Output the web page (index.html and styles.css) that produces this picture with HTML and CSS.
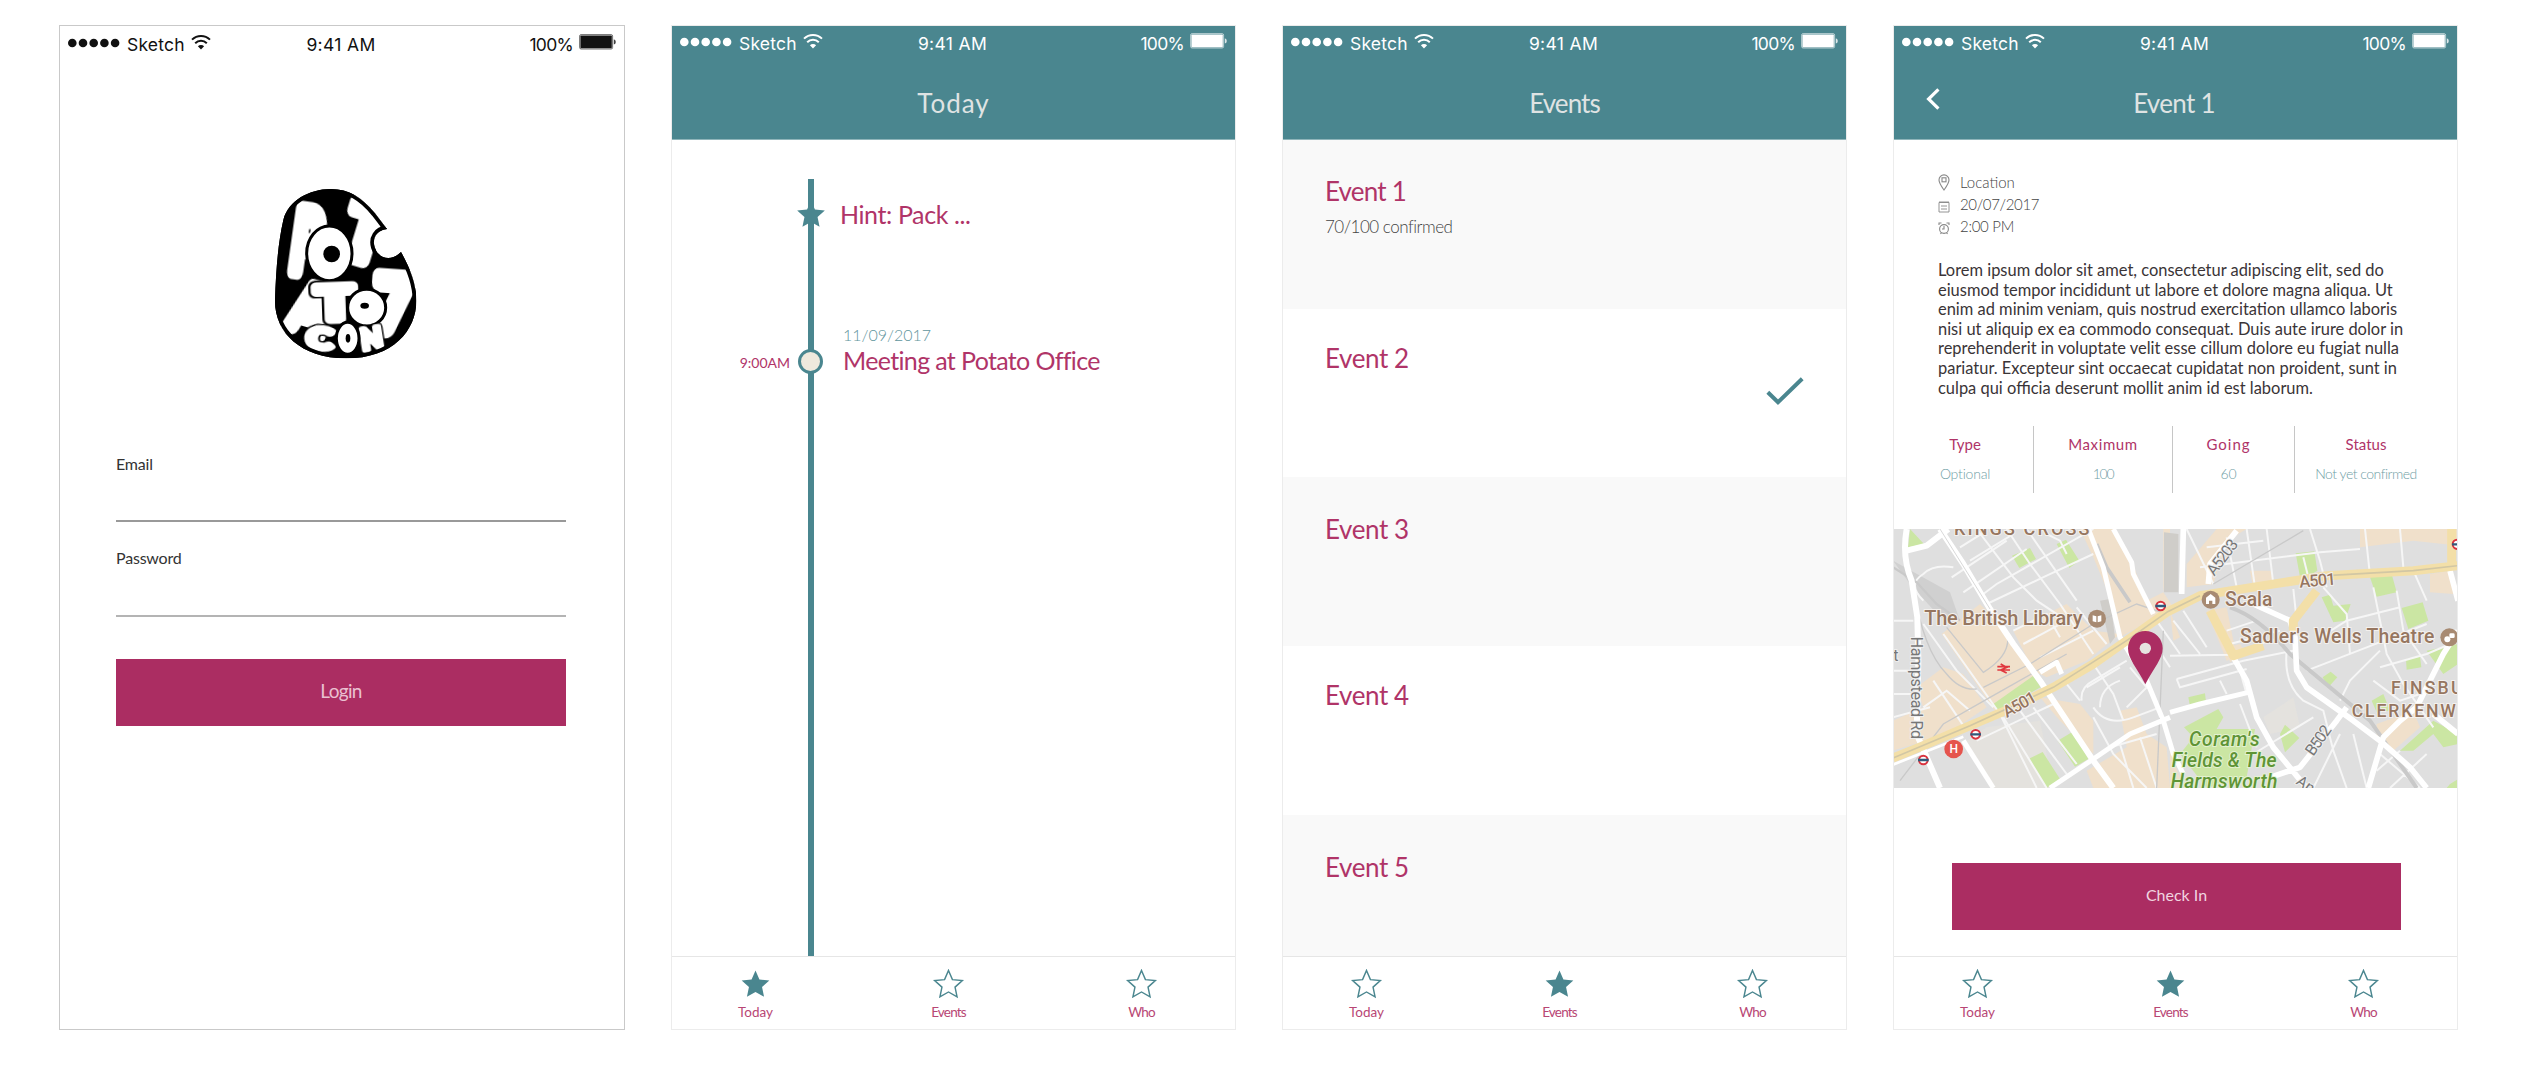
FILE: index.html
```html
<!DOCTYPE html>
<html lang="en">
<head>
<meta charset="utf-8">
<title>Potato Con</title>
<link rel="stylesheet" href="styles.css">
</head>
<body>
<svg class="defs" aria-hidden="true">
  <symbol id="star" viewBox="-1.1 -1.1 2.2 2.2"><path d="M0-1 .27-.37 .951-.309 .45 .146 .588 .809 0 .48-.588 .809-.45 .146-.951-.309-.27-.37Z"/></symbol>
  <symbol id="dots" viewBox="0 0 52 10"><circle cx="4.3" cy="5" r="4.3"/><circle cx="15" cy="5" r="4.3"/><circle cx="25.7" cy="5" r="4.3"/><circle cx="36.4" cy="5" r="4.3"/><circle cx="47.1" cy="5" r="4.3"/></symbol>
  <symbol id="wifi" viewBox="0 0 20 16"><path d="M10 15.4 6.9 12.2a4.4 4.4 0 0 1 6.2 0Z"/><path d="M4.2 9.2a8.3 8.3 0 0 1 11.6 0M1 5.6a13 13 0 0 1 18 0" fill="none" stroke="currentColor" stroke-width="2"/></symbol>
  <symbol id="battery" viewBox="0 0 37 16"><rect x=".6" y=".6" width="33" height="14.4" rx="1.5" fill="none" stroke="currentColor" stroke-width="1" opacity=".6"/><rect x="1.4" y="1.6" width="31.4" height="12.6" rx=".6"/><path d="M34.8 5.2q2 .7 2 2.7t-2 2.7Z" opacity=".8"/></symbol>
</svg>
<main class="board">

  <section class="phone phone-login">
    <div class="status">
      <div class="carrier"><svg class="dots"><use href="#dots"/></svg><span class="net">Sketch</span><svg class="wifi"><use href="#wifi"/></svg></div>
      <span class="clock">9:41 AM</span>
      <div class="power"><span class="pct">100%</span><svg class="battery"><use href="#battery"/></svg></div>
    </div>
    <svg class="logo" viewBox="72 54 432 513">
      <clipPath id="potato"><path d="M240 57C295 56 336 82 375 130L411 177C380 181 366 204 374 232C384 266 424 276 453 246C478 290 499 340 499 392C499 480 430 565 288 565C150 565 73 484 75 390C78 300 84 220 100 150C115 90 180 58 240 57Z"/></clipPath>
      <g clip-path="url(#potato)">
        <rect x="72" y="54" width="432" height="513"/>
        <g class="logo-letters">
          <text transform="translate(158 306) rotate(8) scale(2.1 3.9)">P</text>
          <text transform="translate(326 268) rotate(17) scale(3 3.5)">T</text>
          <ellipse cx="238" cy="250" rx="68" ry="82"/>
          <text transform="translate(160 484) rotate(16) scale(2.3 2.9)">A</text>
          <text transform="translate(256 448) rotate(-2) scale(2.8 2.1)">T</text>
          <text transform="translate(422 484) rotate(4) scale(2.9 3.5)">7</text>
          <ellipse cx="350" cy="413" rx="57" ry="55"/>
          <text transform="translate(206 536) rotate(6) scale(1.8 1.3)">C</text>
          <text transform="translate(370 536) rotate(-9) scale(1.25 1.25)">N</text>
          <ellipse cx="293" cy="505" rx="34" ry="48"/>
        </g>
        <circle cx="245" cy="252" r="25"/>
        <ellipse cx="344" cy="407" rx="13" ry="9"/>
        <ellipse cx="294" cy="505" rx="7" ry="13"/>
        <path d="M240 57C295 56 336 82 375 130L411 177C380 181 366 204 374 232C384 266 424 276 453 246C478 290 499 340 499 392C499 480 430 565 288 565C150 565 73 484 75 390C78 300 84 220 100 150C115 90 180 58 240 57Z" fill="none" stroke="#000" stroke-width="22"/>
      </g>
    </svg>
    <form class="login">
      <label class="field field-email"><span>Email</span></label>
      <label class="field field-password"><span>Password</span></label>
      <button type="button" class="btn btn-login">Login</button>
    </form>
  </section>

  <section class="phone">
    <header class="bar">
      <div class="status">
        <div class="carrier"><svg class="dots"><use href="#dots"/></svg><span class="net">Sketch</span><svg class="wifi"><use href="#wifi"/></svg></div>
        <span class="clock">9:41 AM</span>
        <div class="power"><span class="pct">100%</span><svg class="battery"><use href="#battery"/></svg></div>
      </div>
      <div class="title-row"><h1 class="title-today">Today</h1></div>
    </header>
    <div class="timeline">
      <div class="entry entry-hint">
        <span></span>
        <svg class="hint-star"><use href="#star"/></svg>
        <h2>Hint: Pack ...</h2>
      </div>
      <div class="entry entry-meeting">
        <time class="hour">9:00AM</time>
        <i class="node"></i>
        <div><time class="date">11/09/2017</time><h2>Meeting at Potato Office</h2></div>
      </div>
    </div>
    <nav class="tabs">
      <a class="tab active"><svg><use href="#star"/></svg><span class="l-today">Today</span></a>
      <a class="tab"><svg><use href="#star"/></svg><span>Events</span></a>
      <a class="tab"><svg><use href="#star"/></svg><span>Who</span></a>
    </nav>
  </section>

  <section class="phone">
    <header class="bar">
      <div class="status">
        <div class="carrier"><svg class="dots"><use href="#dots"/></svg><span class="net">Sketch</span><svg class="wifi"><use href="#wifi"/></svg></div>
        <span class="clock">9:41 AM</span>
        <div class="power"><span class="pct">100%</span><svg class="battery"><use href="#battery"/></svg></div>
      </div>
      <div class="title-row"><h1>Events</h1></div>
    </header>
    <div class="events">
      <article class="event"><div><h2 class="one">Event 1</h2><p>70/100 confirmed</p></div></article>
      <article class="event"><h2>Event 2</h2><svg class="check" viewBox="0 0 38 28"><path d="M1.8 15.2 12 25.2 36.2 1.8" fill="none" stroke="currentColor" stroke-width="4"/></svg></article>
      <article class="event"><h2>Event 3</h2></article>
      <article class="event"><h2>Event 4</h2></article>
      <article class="event"><h2>Event 5</h2></article>
    </div>
    <nav class="tabs">
      <a class="tab"><svg><use href="#star"/></svg><span class="l-today">Today</span></a>
      <a class="tab active"><svg><use href="#star"/></svg><span>Events</span></a>
      <a class="tab"><svg><use href="#star"/></svg><span>Who</span></a>
    </nav>
  </section>

  <section class="phone">
    <header class="bar">
      <div class="status">
        <div class="carrier"><svg class="dots"><use href="#dots"/></svg><span class="net">Sketch</span><svg class="wifi"><use href="#wifi"/></svg></div>
        <span class="clock">9:41 AM</span>
        <div class="power"><span class="pct">100%</span><svg class="battery"><use href="#battery"/></svg></div>
      </div>
      <div class="title-row">
        <svg class="back" viewBox="0 0 14 22"><path d="M12.4 1.4 2.6 11 12.4 20.6" fill="none" stroke="#fff" stroke-width="3.2"/></svg>
        <h1 class="title-event">Event 1</h1>
      </div>
    </header>
    <ul class="meta">
      <li><svg viewBox="0 0 12 17"><path d="M6 16C3 11.6 1 8.8 1 5.9a5 5 0 0 1 10 0C11 8.8 9 11.6 6 16Z"/><rect x="4" y="3.8" width="4" height="4"/></svg><span>Location</span></li>
      <li><svg class="low" viewBox="0 0 12 17"><path d="M1 4.5H11V14H1ZM1 4H11M3 8H9M3 11H9" stroke-width=".9"/></svg><span class="day">20/07/2017</span></li>
      <li><svg class="low" viewBox="0 0 12 17"><circle cx="6" cy="9" r="4.4"/><path d="M1 5V3H3.5M11 5V3H8.5M6 6V9H4M2.5 14 3.5 12.6M9.5 14 8.5 12.6"/></svg><span class="hm">2:00 PM</span></li>
    </ul>
    <p class="lorem">Lorem ipsum dolor sit amet, consectetur adipiscing elit, sed do<br>eiusmod tempor incididunt ut labore et dolore magna aliqua. Ut<br>enim ad minim veniam, quis nostrud exercitation ullamco laboris<br>nisi ut aliquip ex ea commodo consequat. Duis aute irure dolor in<br>reprehenderit in voluptate velit esse cillum dolore eu fugiat nulla<br>pariatur. Excepteur sint occaecat cupidatat non proident, sunt in<br>culpa qui officia deserunt mollit anim id est laborum.</p>
    <dl class="stats">
      <div><dt>Type</dt><dd class="opt">Optional</dd></div>
      <div><dt class="max">Maximum</dt><dd class="num">100</dd></div>
      <div class="going"><dt>Going</dt><dd>60</dd></div>
      <div><dt>Status</dt><dd class="state">Not yet confirmed</dd></div>
    </dl>
    <svg class="map" viewBox="39 25 1695 777">
      <rect x="39" y="25" width="1695" height="777" fill="#dfdfdf"/>
      <!-- built-up areas -->
      <g fill="#f0e0cb">
        <path d="M600 25H870V60L850 215 880 260 720 350 690 230 640 110ZM700 25 755 120 800 240 850 215 850 25Z"/>
        <path d="M185 340 300 250 380 330 470 470 345 570Z"/>
        <path d="M400 330 560 250 640 330 720 340 620 420 500 470 460 450Z"/>
        <path d="M39 600 130 560 110 500 190 440 250 460 320 560 200 640 39 690Z"/>
        <path d="M480 530 600 550 640 600 640 700 540 600ZM720 570 770 560 800 640 860 680 870 802H640L620 750 740 680Z"/>
        <path d="M870 270 900 350 880 360ZM920 130 1010 25H1100L1040 60 1000 190 920 200ZM1110 150 1175 150 1180 200 1120 205Z"/>
        <path d="M1440 25H1734V75L1600 60 1440 80ZM1650 160 1710 150 1720 220 1650 215Z"/>
        <path d="M1490 610 1600 570 1620 620 1540 690 1490 660ZM870 690 910 802H870ZM1040 380 1080 370 1100 400 1050 425Z"/>
        <path d="M980 270 1040 260 1070 410 1040 420Z"/>
      </g>
      <path d="M715 25 770 135 830 25Z" fill="#dfdfdf"/>
      <path d="M39 120 210 215 240 300 180 290 90 190Z" fill="#d0d0d0"/>
      <path d="M660 240 690 235 705 350 690 370ZM852 35 895 40V215H852Z" fill="#cfcdc9"/>
      <path d="M320 620 480 600 520 802H340L260 660ZM1150 590 1240 530 1260 620 1170 640Z" fill="#e4e2de"/>
      <!-- parks -->
      <g fill="#cbe6a3">
        <path d="M90 25 132 70 84 80ZM396 105 450 82 468 115 418 142ZM530 70 558 57 598 120 568 142ZM340 550 460 465 482 500 350 572ZM533 660 578 633 625 715 585 738ZM445 715 488 694 540 775 500 802Z"/>
        <path d="M1247 98 1303 92 1312 150 1262 180ZM1470 170 1535 160 1550 215 1490 228ZM1325 230 1350 222 1360 255 1412 250 1395 300 1360 305ZM1565 262 1628 245 1645 300 1585 325ZM1328 470 1352 453 1372 470 1345 500ZM1578 415 1620 408 1624 440 1580 447ZM1640 390 1734 370V430L1690 460Z"/>
        <path d="M925 530 975 518 978 545 930 557ZM912 620 1015 565 1030 590 1010 625 1125 625 1100 770 980 802 900 700 940 650ZM1200 640 1215 612 1258 652 1215 695ZM1475 540 1510 520 1530 570 1490 575ZM1560 690 1660 600 1734 640V670L1690 680 1660 640 1600 690ZM1710 790 1734 775V802H1700Z"/>
      </g>
      <!-- minor streets -->
      <g fill="none" stroke="#f6f6f6" stroke-width="6">
        <path d="M215 170 380 60M250 215 440 85M310 220 350 190 640 25M320 250 500 165 640 100M240 80 320 30M270 120 400 40M290 25 400 170 470 240 560 300M380 25 450 130 540 250M440 25 520 140 590 240M500 40 540 60 560 100"/>
        <path d="M130 240Q80 190 130 160Q160 130 220 140M39 300H100M39 450H110M39 520H100M130 310 230 450 340 560M190 340 360 580 470 802M130 560 200 510 270 570M160 480 260 630M39 590 150 560M290 660 520 550M370 590 500 802M420 570 560 760M460 560 590 730"/>
        <path d="M430 370 560 300M400 330 500 280 540 350M540 250 640 400M590 260 680 370M480 410 640 330M560 490 600 540M640 430 700 520 730 600M620 500 720 440M605 540Q600 500 640 480L740 420M640 560Q680 620 760 590L840 560M660 560Q660 500 720 480M750 440 800 500 740 560M640 590 700 700 800 802M690 680 830 640M720 670 760 802M780 650 830 802M800 330 870 440M830 300 900 400"/>
        <path d="M870 405 1050 402 1170 360M880 300 960 400M910 270 980 380M920 25 1000 190M980 80 1150 60M960 140 1320 95 1440 85M1100 25 1125 200M1040 50 1070 200M1160 25 1180 190M1290 25 1320 120 1340 200M1270 110 1290 190M1455 25 1470 165M1560 25 1570 140"/>
        <path d="M890 475 1090 420 1240 390M890 475 900 500 1100 445M1020 480 1040 520M1080 450 1100 520M1040 330 1130 300M1050 370 1200 330M1220 390Q1210 490 1270 540L1330 570 1360 690 1400 802M1280 450 1460 380 1640 310M1240 205 1250 300M1330 200 1400 280 1410 400M1480 200 1520 400 1570 490 1660 620M1550 210 1570 330 1640 430M1600 150 1640 240M1320 350 1400 300 1560 260M1380 540 1410 480 1500 390M1500 440 1640 400 1734 360M1480 480 1560 540 1620 520M1120 700 1300 590M1380 640 1300 802M1420 640 1460 802M1500 700 1620 802M1490 750 1560 690M1530 802 1640 700M1080 550 1130 680"/>
      </g>
      <!-- railways -->
      <g fill="none" stroke="#c9c9c9">
        <path d="M39 140 110 185 170 250 240 300" stroke-width="7"/>
        <path d="M100 200Q130 390 200 460Q240 510 290 505M200 320 310 455Q400 400 380 330M310 500 450 430 640 310 770 250 860 280M60 780 190 610 330 530 560 400M830 802 850 330M1000 190 1270 30" stroke-width="4"/>
        <path d="M1050 260Q1140 290 1230 400L1470 600 1610 802" stroke-width="12"/>
        <path d="M650 70 680 140 750 245" stroke-width="11"/>
      </g>
      <!-- main roads -->
      <g fill="none" stroke="#fff" stroke-linejoin="round">
        <path d="M80 25Q65 110 95 180L112 290 115 420 110 640 180 802M80 90 140 75 205 25M180 25 250 130 330 265 400 370 480 480 520 540 640 720 700 802" stroke-width="18"/>
        <path d="M625 25 670 140 720 350 800 480 850 600 880 700 910 760M700 25 755 125 760 160 820 280M480 455 530 425 545 460M870 575 960 550 1105 515M510 802 640 715 750 640 870 590" stroke-width="15"/>
        <path d="M910 25 905 220M985 190 990 130 1070 30M1120 250 1230 300 1245 350 1250 450 1280 500 1420 600 1500 660 1590 740 1640 802M1060 410 1100 480 1130 590 1180 680 1280 802M1170 770 1260 740 1370 600 1400 560M1465 802 1510 650 1560 600 1610 560 1690 400 1734 330M1710 150 1734 240M1660 580 1734 640" stroke-width="17"/>
        <path d="M250 660 340 802" stroke-width="15"/>
      </g>
      <path d="M180 25 330 265" stroke="#c4c4c4" stroke-width="2"/>
      <!-- A501 -->
      <g fill="none" stroke-linejoin="round">
        <path d="M39 712 130 675 270 615 400 560 520 500 640 430 740 360 860 275 960 225 1150 195 1340 165 1600 150 1734 135M990 270 1060 405 1150 375M1310 210 1240 300 1240 330M1715 25V140" stroke="#f3dfa8" stroke-width="27"/>
        <path d="M39 712 270 615 520 500 740 360 860 275 960 225M1340 165 1600 150 1734 135" stroke="#d2c7a4" stroke-width="5"/>
        <path d="M39 732 250 648" stroke="#fff" stroke-width="8"/>
      </g>
      <!-- labels -->
      <g class="map-label">
        <text x="222" y="42" font-size="54" textLength="406">KINGS CROSS</text>
        <text x="133" y="313" font-size="60" textLength="475">The British Library</text>
        <text x="1035" y="255" font-size="58" textLength="142">Scala</text>
        <text x="1080" y="368" font-size="58" textLength="583">Sadler's Wells Theatre</text>
        <text x="1533" y="519" font-size="53" letter-spacing="6.5">FINSBU</text>
        <text x="1415" y="590" font-size="53" letter-spacing="5.5">CLERKENW</text>
        <text transform="translate(380 592) rotate(-29)" font-size="50" textLength="107">A501</text>
        <text transform="translate(1259 201) rotate(-5)" font-size="50" textLength="110">A501</text>
      </g>
      <g class="map-road">
        <text transform="translate(1003 168) rotate(-53)" font-size="48" textLength="122">A5203</text>
        <text transform="translate(1300 708) rotate(-55)" font-size="48" textLength="98">B502</text>
        <text transform="translate(92 348) rotate(90)" font-size="48" textLength="307">Hampstead Rd</text>
        <text transform="translate(1246 788) rotate(35)" font-size="46">An</text>
        <text x="40" y="422" font-size="48">t</text>
      </g>
      <g class="map-park">
        <text x="927" y="675" font-size="58" textLength="212">Coram's</text>
        <text x="875" y="740" font-size="58" textLength="315">Fields &amp; The</text>
        <text x="872" y="803" font-size="58" textLength="320">Harmsworth</text>
      </g>
      <!-- places -->
      <g fill="#a78a72"><circle cx="651" cy="294" r="27"/><circle cx="992" cy="237" r="27"/><circle cx="1708" cy="350" r="27"/></g>
      <g fill="#fff"><path d="M638 284 649 287V305L638 302ZM664 284 653 287V305L664 302Z"/><path d="M978 250V231L992 220 1006 231V250H997V240H987V250Z"/><circle cx="1702" cy="356" r="9"/><rect x="1708" y="338" width="16" height="14" rx="4"/></g>
      <g fill="#fff" stroke="#d9333f" stroke-width="6"><circle cx="842" cy="256" r="13"/><circle cx="287" cy="641" r="13"/><circle cx="130" cy="718" r="13"/><circle cx="1732" cy="71" r="14"/></g>
      <path d="M826 256H858M271 641H303M114 718H146M1716 71H1734" stroke="#31597a" stroke-width="7"/>
      <circle cx="221" cy="685" r="28" fill="#e5544d"/>
      <text x="221" y="698" font-size="36" text-anchor="middle" class="hospital">H</text>
      <path d="M352 438H390M352 448H390M362 430 380 440 362 448 380 457" fill="none" stroke="#e0383f" stroke-width="5"/>
      <path d="M796 491C770 440 744 415 744 383a52 52 0 0 1 104 0C848 415 822 440 796 491Z" fill="#ab2d62"/>
      <circle cx="796" cy="383" r="17" fill="#e6e3e0"/>
    </svg>
    <button type="button" class="btn btn-checkin">Check In</button>
    <nav class="tabs">
      <a class="tab"><svg><use href="#star"/></svg><span class="l-today">Today</span></a>
      <a class="tab active"><svg><use href="#star"/></svg><span>Events</span></a>
      <a class="tab"><svg><use href="#star"/></svg><span>Who</span></a>
    </nav>
  </section>

</main>
</body>
</html>
```
FILE: styles.css
```css
* { box-sizing: border-box; margin: 0; padding: 0; }
body { background: #fff; font-family: Lato, sans-serif; }
.defs { display: none; }
svg { display: block; flex: none; }

.board { display: flex; gap: 46px; padding: 25px 0 0 59px; }
.phone { display: flex; flex-direction: column; width: 565px; height: 1005px; border: 1px solid #ececec; background: #fff; overflow: hidden; flex: none; }
.phone-login { width: 566px; border-color: #c9c9c9; }

/* status bar */
.status { display: grid; grid-template-columns: 1fr auto 1fr; height: 24px; padding: 0 8px; font: 400 17.5px/24px Inter, sans-serif; color: #fff; fill: currentColor; }
.phone-login .status { margin-top: 7px; color: #111; }
.carrier, .power { display: flex; }
.power { justify-content: flex-end; }
.dots { width: 52px; height: 10px; margin: 5px 7px 0 0; }
.net { letter-spacing: .2px; }
.wifi { width: 20px; height: 16px; margin: 1px 0 0 6px; }
.clock { letter-spacing: .35px; margin-right: 2px; }
.pct { letter-spacing: -.7px; }
.battery { width: 37px; height: 16px; margin: 1px 0 0 6px; }

/* header */
.bar { height: 114px; background: #4a868f; border-bottom: 1px solid #8fb5ba; padding-top: 6px; margin: 0 -1px; flex: none; box-shadow: 0 -1px 0 #4a868f; }
.bar .status { padding: 0 9px; }
.title-row { display: grid; grid-template-columns: 1fr auto 1fr; margin-top: 27px; }
h1 { grid-column: 2; font-weight: 400; font-size: 26px; line-height: 40px; letter-spacing: -.9px; color: #dfe3e3; }
.title-today { letter-spacing: 1px; }
.title-event { letter-spacing: -.7px; margin-right: 3px; }
.back { grid-column: 1; width: 14px; height: 22px; margin: 5px 0 0 33px; }
h2 { font-weight: 400; color: #b03468; }

/* login */
.logo { width: 144px; height: 171px; margin: 131px 0 0 214px; }
.logo-letters { fill: #fff; }
.logo-letters text { stroke: #fff; stroke-width: 13; stroke-linejoin: round; font: 900 66px Lato, sans-serif; text-anchor: middle; filter: drop-shadow(2px 0 0 #000) drop-shadow(-2px 0 0 #000) drop-shadow(0 2px 0 #000) drop-shadow(0 -2px 0 #000); }
.logo-letters ellipse { stroke: #000; stroke-width: 9; }
.login { margin: 95px 56px 0 56px; width: 450px; }
.field { display: block; border-bottom: 2px solid #999; color: #333; font-size: 16px; line-height: 20px; letter-spacing: -.2px; }
.field-email { height: 68px; }
.field-password { height: 69px; margin-top: 26px; border-color: #b4b4b4; }
.btn { display: block; width: 450px; height: 67px; border: 0; background: #ab2d62; color: #f1d5e0; font-family: Lato, sans-serif; flex: none; }
.btn-login { margin-top: 42px; font-size: 19px; letter-spacing: -.7px; padding-bottom: 5px; color: #eac0d1; }

/* timeline */
.timeline { flex: 1; margin-top: 39px; background: linear-gradient(#4a868f, #4a868f) 136px 0 / 6px 100% no-repeat; }
.entry { display: grid; grid-template-columns: 118px 26px 1fr; column-gap: 8px; }
.entry-hint { padding-top: 20px; }
.entry-hint h2 { margin-left: 8px; letter-spacing: -.5px; }
.entry h2 { font-size: 25px; line-height: 30px; letter-spacing: -.65px; }
.entry.entry-hint h2 { letter-spacing: -.4px; }
.hint-star { width: 32px; height: 32px; fill: #4a868f; margin: 0 0 0 -3px; }
.entry-meeting { margin-top: 94px; }
.entry-meeting > div { margin-left: 11px; }
.hour { justify-self: end; font-size: 14px; line-height: 20px; margin-top: 28px; color: #b03468; }
.node { width: 25px; height: 25px; border: 3px solid #4a868f; border-radius: 50%; background: #efe9dd; margin-top: 24px; }
.date { display: block; font-weight: 300; font-size: 16px; line-height: 20px; color: #5f959d; }

/* tab bar */
.tabs { display: grid; grid-template-columns: 167px 219px 167px; height: 73px; margin-top: auto; padding-top: 12px; border-top: 1px solid #e6e6e6; background: #fff; flex: none; }
.tab { display: flex; flex-direction: column; align-items: center; gap: 2px; }
.tab svg { width: 33px; height: 32px; fill: none; stroke: #4a868f; stroke-width: .1; }
.tab.active svg { fill: #4a868f; stroke: none; }
.tab span { font-size: 13.5px; line-height: 18px; letter-spacing: -.8px; color: #b84674; }
.tab .l-today { letter-spacing: 0; }

/* events */
.events { flex: 1; margin: 0 -1px; overflow: hidden; }
.event { display: flex; height: 168.7px; padding: 36px 43px 0; }
.event:nth-child(odd) { background: #f9f9f9; }
.event:nth-child(even) { padding-top: 34px; }
.event:nth-child(n+3):nth-child(odd) { padding-top: 37px; }
.event h2 { font-size: 26px; line-height: 30px; letter-spacing: -.4px; }
.event .one { letter-spacing: -.8px; }
.event p { margin-top: 11px; font-weight: 300; font-size: 17px; line-height: 20px; letter-spacing: -.5px; color: #444; }
.check { width: 38px; height: 28px; margin: 34px 0 0 auto; color: #4a868f; }

/* event detail */
.meta { list-style: none; padding: 31px 0 0 44px; font-weight: 300; font-size: 15px; line-height: 22px; color: #444; }
.meta li { display: flex; height: 22px; }
.meta svg { width: 12px; height: 17px; margin: 3px 10px 0 0; fill: none; stroke: #888; stroke-width: 1.1; }
.meta svg.low { margin-top: 5px; }
.day { letter-spacing: -.35px; }
.hm { letter-spacing: -.3px; }
.lorem { margin: 24px 0 0 44px; font-size: 16.45px; line-height: 19.6px; color: #3a3437; white-space: nowrap; }
.stats { display: grid; grid-template-columns: 137px 139px 122px 142px; margin: 28px 0 0 3px; height: 67px; text-align: center; flex: none; }
.stats > div { padding-top: 8px; border-right: 1px solid #c6c6c6; }
.stats > div:last-child { border: 0; }
.stats .going { padding-right: 10px; }
.stats dt { font-size: 15px; line-height: 20px; color: #b03468; }
.stats .max { letter-spacing: .6px; }
.going dt { letter-spacing: 1px; }
.stats dd { margin-top: 10px; font-weight: 300; font-size: 14px; line-height: 20px; color: #6f9ea5; }
.stats .opt { letter-spacing: -.2px; }
.stats .num { letter-spacing: -1.3px; }
.stats .state { letter-spacing: -.5px; }
.map { width: 565px; height: 259px; margin: 36px -1px 0; }
.map-label { font-family: Roboto, sans-serif; font-weight: 500; fill: #967660; stroke: #f4f1ee; stroke-width: 6; paint-order: stroke; }
.map-road { font-family: Roboto, sans-serif; font-weight: 400; fill: #777; stroke: #eee; stroke-width: 6; paint-order: stroke; }
.map-park { font-family: Roboto, sans-serif; font-style: italic; font-weight: 500; fill: #5f9436; stroke: #e3f1d0; stroke-width: 6; paint-order: stroke; }
.hospital { font-family: Roboto, sans-serif; font-weight: 500; fill: #fff; }
.btn-checkin { width: 449px; margin: 75px 0 0 58px; font-size: 16px; padding-bottom: 4px; }
```
